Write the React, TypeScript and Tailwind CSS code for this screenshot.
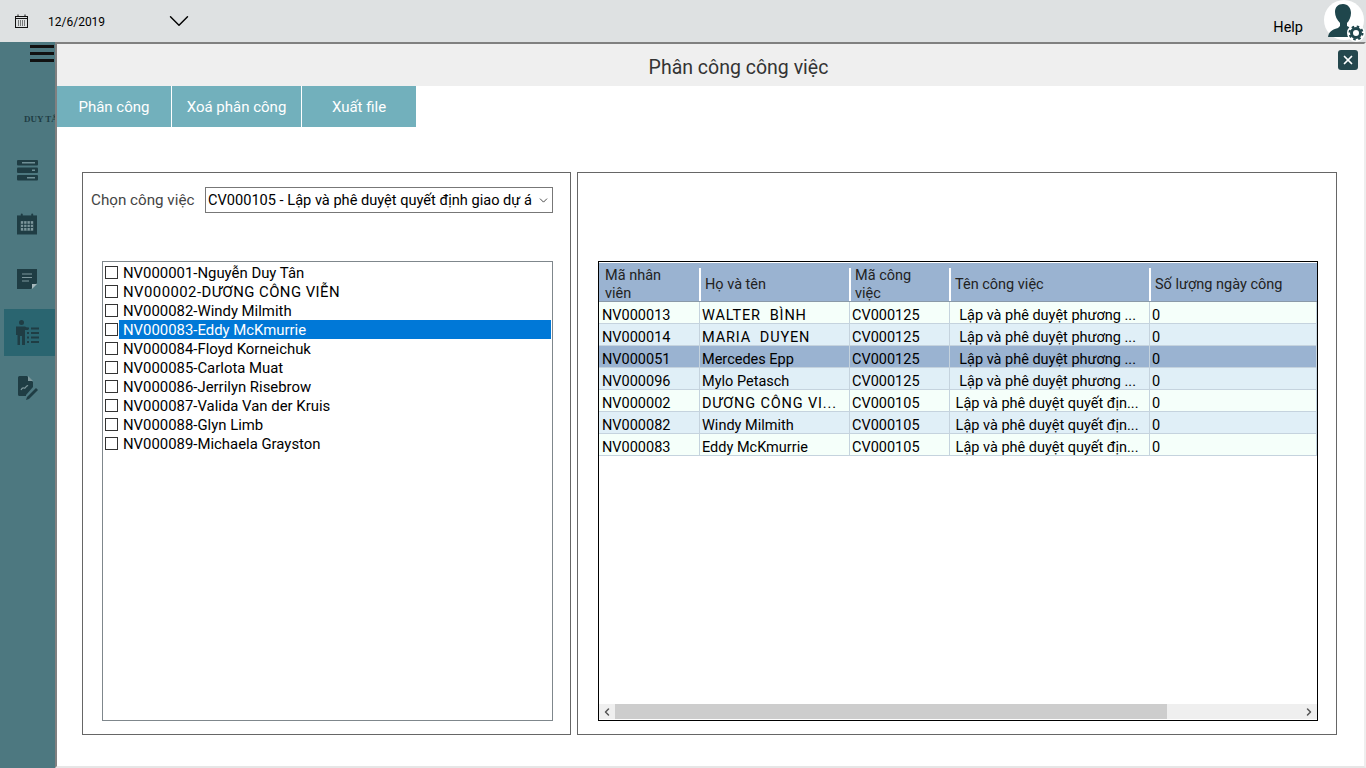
import { ChevronDown, ChevronLeft, ChevronRight, X } from "lucide-react";

const FONT = "font-['Roboto','Liberation_Sans',sans-serif]";

const employees = [
  "NV000001-Nguyễn Duy Tân",
  "NV000002-DƯƠNG CÔNG VIỄN",
  "NV000082-Windy Milmith",
  "NV000083-Eddy McKmurrie",
  "NV000084-Floyd Korneichuk",
  "NV000085-Carlota Muat",
  "NV000086-Jerrilyn Risebrow",
  "NV000087-Valida Van der Kruis",
  "NV000088-Glyn Limb",
  "NV000089-Michaela Grayston",
];

const rows = [
  ["NV000013", "WALTER  BÌNH", "CV000125", "  Lập và phê duyệt phương ...", "0"],
  ["NV000014", "MARIA  DUYEN", "CV000125", "  Lập và phê duyệt phương ...", "0"],
  ["NV000051", "Mercedes Epp", "CV000125", "  Lập và phê duyệt phương ...", "0"],
  ["NV000096", "Mylo Petasch", "CV000125", "  Lập và phê duyệt phương ...", "0"],
  ["NV000002", "DƯƠNG CÔNG VI...", "CV000105", " Lập và phê duyệt quyết địn...", "0"],
  ["NV000082", "Windy Milmith", "CV000105", " Lập và phê duyệt quyết địn...", "0"],
  ["NV000083", "Eddy McKmurrie", "CV000105", " Lập và phê duyệt quyết địn...", "0"],
];

const headerCells = [
  { w: "w-[102px] pl-[6px] border-r-2", label: <>Mã nhân<br />viên</> },
  { w: "w-[150px] pl-[4px] border-r-2", label: "Họ và tên" },
  { w: "w-[100px] pl-[4px] border-r-2", label: <>Mã công<br />việc</> },
  { w: "w-[200px] pl-[4px] border-r-2", label: "Tên công việc" },
  { w: "w-[166px] pl-[4px]", label: "Số lượng ngày công" },
];

const cellClasses = [
  "w-[101px] pl-[3px]",
  "w-[150px] pl-[2px]",
  "w-[100px] pl-[2px]",
  "w-[200px] pl-[2px]",
  "w-[167px] pl-[2px]",
];

function SidebarIcons() {
  return (
    <div className="flex flex-col items-end">
      <div className="flex h-[53px] w-[51px] items-center justify-center pr-[5px]">
        <svg width="21" height="21" viewBox="0 0 21 21" fill="#1f3d44">
          <rect x="0" y="0" width="21" height="5.5" rx="1" />
          <rect x="0" y="7.5" width="21" height="5.5" rx="1" />
          <rect x="0" y="15" width="21" height="5.5" rx="1" />
          <rect x="5" y="2" width="13" height="1.5" fill="#6f8f96" />
          <rect x="15" y="9.5" width="3" height="1.5" fill="#6f8f96" />
          <rect x="10" y="17" width="8" height="1.5" fill="#6f8f96" />
        </svg>
      </div>
      <div className="flex h-[54px] w-[51px] items-center justify-center pr-[5px]">
        <svg width="20" height="22" viewBox="0 0 21 22" fill="#1f3d44">
          <rect x="0" y="2" width="21" height="20" />
          <rect x="4" y="0" width="2" height="4" rx="1" />
          <rect x="15" y="0" width="2" height="4" rx="1" />
          <rect x="4" y="8" width="13" height="10" fill="#7d979c" />
          <path d="M7 8v10M10.5 8v10M14 8v10M4 11.3h13M4 14.6h13" stroke="#1f3d44" strokeWidth="1" />
        </svg>
      </div>
      <div className="flex h-[58px] w-[51px] items-center justify-center pb-[3px] pr-[5px]">
        <svg width="20" height="20" viewBox="0 0 20 20" fill="#1f3d44">
          <path d="M0 0h20v14l-6 6H0z" />
          <path d="M15 15h5l-5 5z" fill="#a5b8bc" />
          <path d="M5 5h10M5 8.5h10M5 12h7" stroke="#7d979c" strokeWidth="1.2" />
        </svg>
      </div>
      <div className="flex h-[47px] w-[51px] items-center justify-center bg-[#2a6570] pr-[5px]">
        <svg width="23" height="25" viewBox="0 0 23 25" fill="#1f3d44">
          <circle cx="5.5" cy="2.5" r="2.5" />
          <path d="M0 6.5h9l3 1.5v2H9v15H6v-9H4v9H1.5V15H0z" />
          <path d="M11 8.5h2M15 8.5h8M11 13h2M15 13h8M11 17.5h2M15 17.5h8M11 22h2M15 22h8" stroke="#1f3d44" strokeWidth="2" />
        </svg>
      </div>
      <div className="flex h-[64px] w-[51px] items-center justify-center pr-[3px]">
        <svg width="20" height="24" viewBox="0 0 20 24" fill="#1f3d44">
          <path d="M1.5 0H9l6 6v5l-7 8v1H1.5A1.5 1.5 0 0 1 0 18.5V1.5A1.5 1.5 0 0 1 1.5 0z" />
          <path d="M3 14c2-4 3-1 4-2s2-3 3-2" stroke="#7d979c" strokeWidth="1.2" fill="none" />
          <path d="M10 0l5 5h-5z" fill="#7d979c" />
          <path d="M18 12l2 2-9 9-3 1 1-3z" />
        </svg>
      </div>
    </div>
  );
}

function UserAvatar() {
  return (
    <svg width="42" height="42" viewBox="0 0 42 42">
      <circle cx="21" cy="20" r="20" fill="#ffffff" />
      <path
        d="M20 4c5 0 8 4 8 9 0 4-2 8-4 10v3l6 3-3 8H5c1-5 3-7 10-9l2-2v-3c-3-3-5-7-5-11 0-5 3-8 8-8z"
        fill="#1f464c"
      />
      <circle cx="33" cy="33" r="9" fill="#ffffff" />
      <circle cx="33" cy="33" r="4.5" fill="none" stroke="#1f464c" strokeWidth="3" />
      <circle cx="33" cy="33" r="6.5" fill="none" stroke="#1f464c" strokeWidth="2" strokeDasharray="2.5 2.6" />
    </svg>
  );
}

export default function App() {
  return (
    <div className={`flex h-[768px] w-[1366px] flex-col overflow-hidden bg-white text-black ${FONT}`}>
      <header className="flex h-[42px] shrink-0 items-start bg-[#dee1e2]">
        <svg className="ml-[15px] mt-[14px]" width="13" height="14" viewBox="0 0 13 14" fill="none" stroke="#111">
          <rect x="0.5" y="2.5" width="12" height="11" />
          <path d="M0.5 4.5h12M3 0.5v2M10 0.5v2" />
          <path d="M3 7h7M3 9h7M3 11h7" strokeDasharray="1 1" />
        </svg>
        <span className="ml-[20px] mt-[13px] text-[12px] leading-[18px]">12/6/2019</span>
        <ChevronDown className="ml-[57px] mt-[4px]" size={34} strokeWidth={1} />
        <span className="ml-auto mt-[19px] text-[14.5px] leading-[18px]">Help</span>
        <div className="ml-[20px] mr-0 h-[42px] w-[43px] overflow-hidden">
          <UserAvatar />
        </div>
      </header>

      <div className="flex min-h-0 flex-1">
        <aside className="flex w-[55px] shrink-0 flex-col bg-[#4d7880]">
          <div className="flex h-[24px] justify-end pr-[1px] pt-[3px]">
            <div className="flex w-[24px] flex-col gap-[4px]">
              <div className="h-[3px] bg-[#111]" />
              <div className="h-[3px] bg-[#111]" />
              <div className="h-[3px] bg-[#111]" />
            </div>
          </div>
          <div className="mt-[47px] h-[31px] overflow-hidden whitespace-nowrap pl-[24px] font-['Liberation_Serif',serif] text-[9px] font-bold leading-[12px] text-[#1f3d44]">
            DUY TÂN
          </div>
          <SidebarIcons />
        </aside>

        <main className="flex min-w-0 flex-1 flex-col border-b-2 border-l-2 border-r-2 border-t-2 border-b-[#e6e6e6] border-l-[#808080] border-r-[#eeeeee] border-t-[#808080]">
          <div className="relative flex h-[42px] shrink-0 items-center justify-center bg-[#efefef] pl-[56px] pt-[5px] text-[19.5px] text-[#333]">
            Phân công công việc
            <button className="absolute right-[6px] top-[6px] flex h-[20px] w-[20px] items-center justify-center rounded-[3px] bg-[#24474d] text-white">
              <X size={14} strokeWidth={3} />
            </button>
          </div>

          <nav className="flex h-[41px] shrink-0 gap-px text-[15px] text-white">
            <div className="flex w-[114px] items-center justify-center bg-[#72b0bc] pt-[2px]">Phân công</div>
            <div className="flex w-[129px] items-center justify-center bg-[#72b0bc] pt-[2px]">Xoá phân công</div>
            <div className="flex w-[114px] items-center justify-center bg-[#72b0bc] pt-[2px]">Xuất file</div>
          </nav>

          <div className="mt-[45px] flex h-[563px] gap-[6px] pl-[25px]">
            <section className="flex h-[563px] w-[489px] flex-col border border-[#666] pl-[19px] pt-[14px]">
              <div className="flex h-[26px] items-center text-[14.6px] text-[#444]">
                <span className="ml-[-11px] w-[114px] whitespace-nowrap pt-px text-[15.2px]">Chọn công việc</span>
                <div className="flex h-[26px] w-[348px] items-center justify-between border border-[#777] pl-[2px] pr-[2px] text-black">
                  <span className="overflow-hidden whitespace-nowrap pt-[2px]">CV000105 - Lập và phê duyệt quyết định giao dự á</span>
                  <ChevronDown className="shrink-0" size={13} strokeWidth={1.3} />
                </div>
              </div>
              <ul className="mt-[48px] h-[460px] w-[451px] border border-[#7f878c] pl-[2px] pr-px pt-px text-[14.9px]">
                {employees.map((name, i) => (
                  <li key={name} className="flex h-[19px] items-center">
                    <span className="mr-px h-[13px] w-[13px] shrink-0 border border-[#333] bg-white" />
                    <span
                      className={`flex h-[19px] flex-1 items-center pl-[4px] pt-[2px] ${i === 3 ? "bg-[#0078d7] text-white" : ""} ${i === 1 ? "tracking-[0.45px]" : ""}`}
                    >
                      {name}
                    </span>
                  </li>
                ))}
              </ul>
            </section>

            <section className="h-[563px] w-[760px] border border-[#666] pl-[20px] pt-[88px]">
              <div className="flex h-[460px] w-[720px] flex-col overflow-hidden border border-black text-[14.5px]">
                <div className="flex h-[40px] shrink-0 border-b border-t border-b-[#8a9aa8] border-t-white bg-[#9ab3d1] pt-[5px] leading-[18px] text-[#222]">
                  {headerCells.map((cell, i) => (
                    <div key={i} className={`${cell.w} flex shrink-0 items-center border-white`}>
                      <span>{cell.label}</span>
                    </div>
                  ))}
                </div>
                <div className="min-h-0 flex-1">
                  {rows.map((row, i) => (
                    <div
                      key={row[0]}
                      className={`flex h-[22px] border-b border-[#c5d3de] ${
                        i === 2 ? "bg-[#9ab3d1]" : i % 2 === 0 ? "bg-[#f5fffa]" : "bg-[#e0eff7]"
                      }`}
                    >
                      {row.map((cell, j) => (
                        <div
                          key={j}
                          className={`${cellClasses[j]} shrink-0 overflow-hidden whitespace-pre border-r border-[#c5d3de] pt-[4px] leading-[20px] ${
                            j === 1 && cell === cell.toUpperCase() ? "tracking-[0.85px]" : ""
                          }`}
                        >
                          {cell}
                        </div>
                      ))}
                    </div>
                  ))}
                </div>
                <div className="mb-px flex h-[15px] shrink-0 items-center bg-[#efefef]">
                  <div className="flex h-[15px] w-[16px] items-center justify-center">
                    <ChevronLeft size={12} strokeWidth={3} color="#555" />
                  </div>
                  <div className="h-[15px] w-[552px] bg-[#cdcdcd]" />
                  <div className="ml-auto flex h-[15px] w-[16px] items-center justify-center">
                    <ChevronRight size={12} strokeWidth={3} color="#555" />
                  </div>
                </div>
              </div>
            </section>
          </div>
        </main>
      </div>
    </div>
  );
}
